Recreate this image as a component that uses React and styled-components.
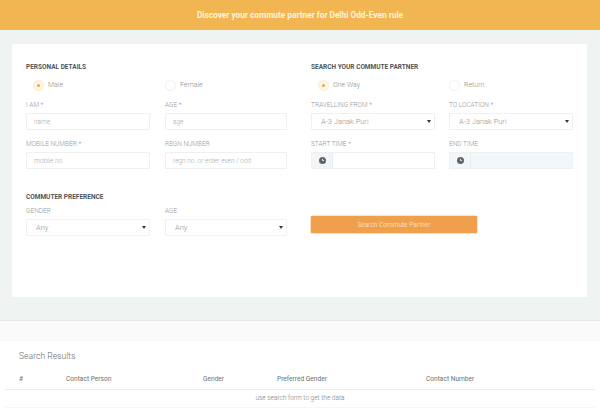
import styled, { createGlobalStyle } from "styled-components";

const GlobalStyle = createGlobalStyle`
  * { box-sizing: border-box; }
  html, body { margin: 0; padding: 0; background: #fff; }
  body { font-family: Roboto, "Liberation Sans", sans-serif; width: 600px; height: 415px; overflow: hidden; }
`;

const Banner = styled.header`
  height: 30px;
  background: #f1b551;
  color: #fdf3df;
  font-size: 8.3px;
  font-weight: 700;
  display: flex;
  align-items: center;
  justify-content: center;
`;

const FormArea = styled.section`
  background: #eff4f3;
  height: 291px;
  padding: 14px 13px 24px 12px;
  border-bottom: 1px solid #e6eaea;
`;

const Card = styled.div`
  background: #fff;
  height: 253px;
  padding: 18px 14px 0;
  display: grid;
  grid-template-columns: 261px 262px;
  column-gap: 24px;
  align-content: start;
`;

const Column = styled.div`
  display: flex;
  flex-direction: column;
  min-width: 0;
`;

const SectionTitle = styled.h3`
  margin: ${(p) => p.$top || 0}px 0 0;
  height: 10px;
  line-height: 10px;
  font-size: 6.5px;
  font-weight: 700;
  color: #4f5557;
`;

const FieldRow = styled.div`
  display: grid;
  grid-template-columns: 124px minmax(0, 1fr);
  column-gap: ${(p) => p.$gap || 15}px;
  margin-top: ${(p) => p.$top || 0}px;
`;

const RadioOption = styled.label`
  display: flex;
  align-items: center;
  gap: 4px;
  height: 12px;
  padding-left: ${(p) => p.$inset}px;
  font-size: 7px;
  font-weight: 300;
  color: #8a8f90;
`;

const RadioMark = styled.span`
  width: 11px;
  height: 11px;
  border-radius: 50%;
  display: flex;
  align-items: center;
  justify-content: center;
  background: ${(p) => (p.$on ? "#fdf6e6" : "#fff")};
  border: 1px solid ${(p) => (p.$on ? "#fbeed2" : "#f0f1f1")};

  &::after {
    content: "";
    width: 3px;
    height: 3px;
    border-radius: 50%;
    background: ${(p) => (p.$on ? "#eda94a" : "transparent")};
  }
`;

const Field = styled.div`
  display: flex;
  flex-direction: column;
  min-width: 0;
`;

const FieldLabel = styled.label`
  height: 10px;
  line-height: 10px;
  margin-bottom: 3px;
  font-size: 6.5px;
  font-weight: 300;
  color: #93989a;
  white-space: nowrap;
`;

const TextInput = styled.input`
  width: 100%;
  height: 17px;
  padding: 0 7px;
  border: 1px solid #eef0f1;
  border-radius: 1px;
  outline: none;
  background: #fff;
  font-family: inherit;
  font-size: 6.5px;
  font-weight: 300;

  &::placeholder { color: #a8acad; opacity: 1; }
`;

const SelectBox = styled.div`
  height: 17px;
  display: flex;
  align-items: center;
  padding-right: 3px;
  border: 1px solid #eef0f1;
  border-radius: 1px;
  background: #fff;
`;

const SelectField = styled.select`
  flex: 1;
  min-width: 0;
  height: 100%;
  padding: 0 0 0 9px;
  border: 0;
  outline: none;
  appearance: none;
  background: transparent;
  font-family: inherit;
  font-size: 7.5px;
  font-weight: 300;
  color: #8f9495;
`;

const Caret = styled.span`
  width: 0;
  height: 0;
  border-left: 2px solid transparent;
  border-right: 2px solid transparent;
  border-top: 3px solid #33383b;
`;

const TimeBox = styled.div`
  height: 17px;
  display: flex;
  border: 1px solid #eef0f1;
  background: ${(p) => (p.$disabled ? "#f3f7f9" : "#fff")};
`;

const TimeAddon = styled.span`
  width: 21px;
  flex: none;
  display: flex;
  align-items: center;
  justify-content: center;
  background: #f3f6f8;
  border-right: 1px solid #e9edee;
`;

const TimeInput = styled.input`
  flex: 1;
  width: 100%;
  min-width: 0;
  padding: 0;
  border: 0;
  outline: none;
  background: transparent;
`;

const SearchButton = styled.button`
  width: 166px;
  height: 17px;
  margin-top: 47px;
  padding: 0;
  border: 0;
  border-radius: 1px;
  background: #f09f4c;
  box-shadow: 0 0 0 0.5px #f6c983;
  color: #fbdcb8;
  font-family: inherit;
  font-size: 6.5px;
  font-weight: 400;
`;

const Spacer = styled.div`
  height: 20px;
  background: #fafafa;
`;

const Results = styled.section`
  padding: 9px 5px 0;
`;

const ResultsTitle = styled.h2`
  margin: 0 0 0 14px;
  height: 13px;
  line-height: 13px;
  font-size: 8.6px;
  font-weight: 300;
  color: #666b6c;
`;

const ResultsHead = styled.div`
  display: grid;
  grid-template-columns: 47px 137px 74px 149px 1fr;
  height: 18px;
  margin-top: 9px;
  padding: 0 14px 3px;
  align-items: center;
  border-bottom: 1px solid #e8ecec;
  font-size: 6.6px;
  font-weight: 400;
  color: #6d7273;
`;

const EmptyRow = styled.div`
  height: 18px;
  line-height: 16px;
  text-align: center;
  font-size: 6.5px;
  font-weight: 300;
  color: #777c7d;
  border-bottom: 1px solid #f5f6f6;
`;

const Req = () => <span> *</span>;

const ClockIcon = () => (
  <svg width="7" height="7" viewBox="0 0 14 14">
    <circle cx="7" cy="7" r="7" fill="#5c666b" />
    <path d="M7 3.5V7h3" fill="none" stroke="#fff" strokeWidth="1.6" />
  </svg>
);

const Radio = ({ on, inset = 0, children }) => (
  <RadioOption $inset={inset}>
    <RadioMark $on={on} />
    {children}
  </RadioOption>
);

const TextField = ({ label, required, placeholder }) => (
  <Field>
    <FieldLabel>{label}{required && <Req />}</FieldLabel>
    <TextInput placeholder={placeholder} />
  </Field>
);

const PickField = ({ label, required, value }) => (
  <Field>
    <FieldLabel>{label}{required && <Req />}</FieldLabel>
    <SelectBox>
      <SelectField defaultValue={value}>
        <option>{value}</option>
      </SelectField>
      <Caret />
    </SelectBox>
  </Field>
);

const TimeField = ({ label, required, disabled }) => (
  <Field>
    <FieldLabel>{label}{required && <Req />}</FieldLabel>
    <TimeBox $disabled={disabled}>
      <TimeAddon><ClockIcon /></TimeAddon>
      <TimeInput disabled={disabled} />
    </TimeBox>
  </Field>
);

export default function App() {
  return (
    <>
      <GlobalStyle />
      <Banner>Discover your commute partner for Delhi Odd-Even rule</Banner>
      <FormArea>
        <Card>
          <Column>
            <SectionTitle>PERSONAL DETAILS</SectionTitle>
            <FieldRow $top={7}>
              <Radio on inset={7}>Male</Radio>
              <Radio>Female</Radio>
            </FieldRow>
            <FieldRow $top={9}>
              <TextField label="I AM" required placeholder="name" />
              <TextField label="AGE" required placeholder="age" />
            </FieldRow>
            <FieldRow $top={9}>
              <TextField label="MOBILE NUMBER" required placeholder="mobile no." />
              <TextField label="REGN NUMBER" placeholder="regn no. or enter even / odd" />
            </FieldRow>
            <SectionTitle $top={23}>COMMUTER PREFERENCE</SectionTitle>
            <FieldRow $top={4}>
              <PickField label="GENDER" value="Any" />
              <PickField label="AGE" value="Any" />
            </FieldRow>
          </Column>
          <Column>
            <SectionTitle>SEARCH YOUR COMMUTE PARTNER</SectionTitle>
            <FieldRow $top={7} $gap={14}>
              <Radio on inset={7}>One Way</Radio>
              <Radio>Return</Radio>
            </FieldRow>
            <FieldRow $top={9} $gap={14}>
              <PickField label="TRAVELLING FROM" required value="A-3 Janak Puri" />
              <PickField label="TO LOCATION" required value="A-3 Janak Puri" />
            </FieldRow>
            <FieldRow $top={9} $gap={14}>
              <TimeField label="START TIME" required />
              <TimeField label="END TIME" disabled />
            </FieldRow>
            <SearchButton>Search Commute Partner</SearchButton>
          </Column>
        </Card>
      </FormArea>
      <Spacer />
      <Results>
        <ResultsTitle>Search Results</ResultsTitle>
        <ResultsHead>
          <span>#</span>
          <span>Contact Person</span>
          <span>Gender</span>
          <span>Preferred Gender</span>
          <span>Contact Number</span>
        </ResultsHead>
        <EmptyRow>use search form to get the data</EmptyRow>
      </Results>
    </>
  );
}
